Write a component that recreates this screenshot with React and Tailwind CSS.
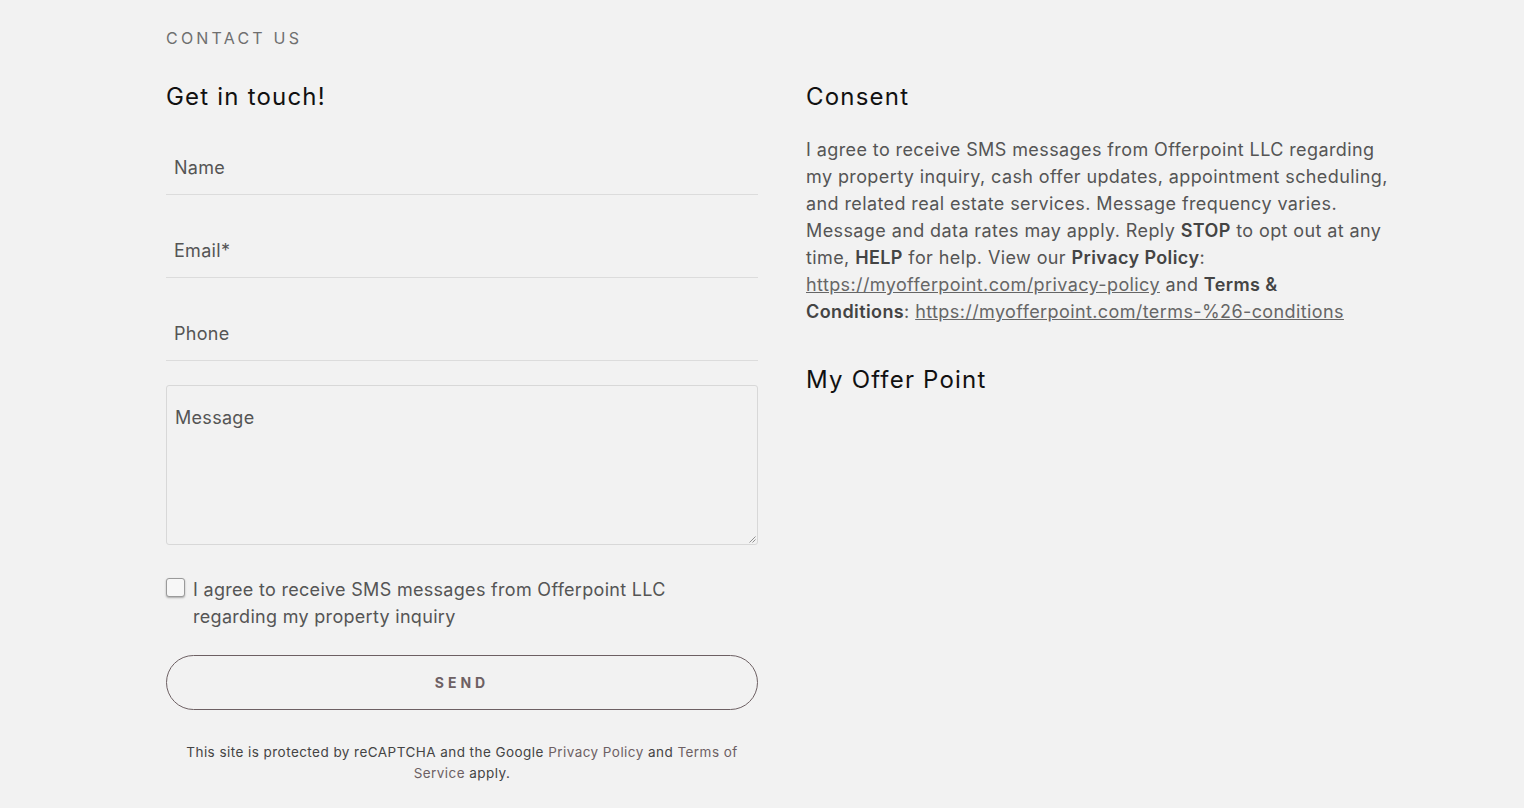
import React from "react";

const font = { fontFamily: "Inter, 'Noto Sans', sans-serif" };

function Field({ label }) {
  return (
    <div className="h-[83px] flex items-end border-b border-[#dcdcdc]">
      <div className="pl-2 pb-[13px] text-[18px] leading-[27px] tracking-[0.3px] text-[#555555]">{label}</div>
    </div>
  );
}

const B = ({ children }) => <b className="font-semibold text-[#444444]">{children}</b>;

export default function App() {
  return (
    <div className="min-h-[808px] bg-[#f2f2f2] font-['Inter','Noto_Sans',sans-serif]" style={font}>
      <div className="pl-[166px] pr-[100px] pt-[27px]">
        <div className="text-[16px] leading-[22px] tracking-[3.2px] text-[#6f6f6f]">CONTACT US</div>
        <div className="flex gap-[48px] mt-[33px]">
          <div className="w-[592px] shrink-0">
            <h2 className="text-[24px] leading-[30px] text-[#111111] tracking-[1.2px]">Get in touch!</h2>
            <div>
              <Field label="Name" />
              <Field label="Email*" />
              <Field label="Phone" />
            </div>
            <div className="relative mt-[24px] h-[160px] border border-[#d8d8d8] rounded-[3px] px-2 pt-[18px]">
              <div className="text-[18px] leading-[27px] tracking-[0.3px] text-[#555555]">Message</div>
              <svg className="absolute right-[1px] bottom-[1px]" width="7" height="7" viewBox="0 0 7 7">
                <path d="M6.5 0.5 L0.5 6.5 M6.5 3.5 L3.5 6.5" stroke="#777" strokeWidth="0.8" />
              </svg>
            </div>
            <div className="mt-[31px] flex gap-[8px]">
              <div className="mt-[2px] w-[19px] h-[19px] shrink-0 border border-[#9a9a9a] rounded-[3px] bg-[#f7f7f7] shadow-[0_1px_2px_rgba(0,0,0,0.3)]" />
              <div className="text-[18px] leading-[27px] tracking-[0.3px] text-[#555555]">
                I agree to receive SMS messages from Offerpoint LLC
                <br />
                regarding my property inquiry
              </div>
            </div>
            <button className="mt-[25px] w-full h-[55px] rounded-full border border-[#6d6063] text-[14px] font-bold tracking-[4px] text-[#6d6063]">
              SEND
            </button>
            <div className="mt-[32px] text-center text-[13.5px] leading-[21px] tracking-[0.45px] text-[#444444]">
              This site is protected by reCAPTCHA and the Google{" "}
              <span className="text-[#6d6063]">Privacy Policy</span> and{" "}
              <span className="text-[#6d6063]">Terms of</span>
              <br />
              <span className="text-[#6d6063]">Service</span> apply.
            </div>
          </div>
          <div className="w-[620px] shrink-0">
            <h2 className="text-[24px] leading-[30px] text-[#111111] tracking-[1.2px]">Consent</h2>
            <div className="mt-[24px] text-[18px] leading-[27px] tracking-[0.4px] text-[#555555] whitespace-nowrap">
              <div>I agree to receive SMS messages from Offerpoint LLC regarding</div>
              <div>my property inquiry, cash offer updates, appointment scheduling,</div>
              <div>and related real estate services. Message frequency varies.</div>
              <div>
                Message and data rates may apply. Reply <B>STOP</B> to opt out at any
              </div>
              <div>
                time, <B>HELP</B> for help. View our <B>Privacy Policy</B>:
              </div>
              <div>
                <a className="underline text-[#666666]">https://myofferpoint.com/privacy-policy</a> and{" "}
                <B>Terms &amp;</B>
              </div>
              <div>
                <B>Conditions</B>:{" "}
                <a className="underline text-[#666666]">https://myofferpoint.com/terms-%26-conditions</a>
              </div>
            </div>
            <h2 className="mt-[40px] text-[24px] leading-[30px] text-[#111111] tracking-[1.2px]">My Offer Point</h2>
          </div>
        </div>
      </div>
    </div>
  );
}
